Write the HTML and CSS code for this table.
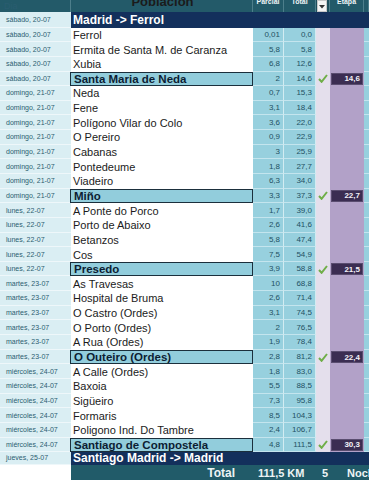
FILE: index.html
```html
<!DOCTYPE html>
<html lang="es">
<head>
<meta charset="utf-8">
<title>Madrid - Ferrol - Santiago</title>
<link rel="stylesheet" href="styles.css">
</head>
<body>
<div class="sheet">
  <div class="row head">
    <div class="c dia hd"><span>Dia</span></div>
    <div class="c pob hd"><span class="big">Población</span></div>
    <div class="c hd"><span>Parcial</span></div>
    <div class="c hd"><span>Total</span></div>
    <div class="c hd filt"><i class="fbtn"><svg width="6" height="4" viewBox="0 0 6 4"><path d="M0 0h6L3 3.5z" fill="#333"/></svg></i></div>
    <div class="c hd"><span>Etapa</span></div>
    <div class="c hd"></div>
  </div>
  <div class="row title">
    <div class="c dia">sábado, 20-07</div>
    <div class="c navy span6">Madrid -&gt; Ferrol</div>
  </div>

  <div class="row"><div class="c dia">sábado, 20-07</div><div class="c pob">Ferrol</div><div class="c num">0,01</div><div class="c num">0,0</div><div class="c f"></div><div class="c et"></div><div class="c st"></div></div>
  <div class="row"><div class="c dia">sábado, 20-07</div><div class="c pob">Ermita de Santa M. de Caranza</div><div class="c num">5,8</div><div class="c num">5,8</div><div class="c f"></div><div class="c et"></div><div class="c st"></div></div>
  <div class="row"><div class="c dia">sábado, 20-07</div><div class="c pob">Xubia</div><div class="c num">6,8</div><div class="c num">12,6</div><div class="c f"></div><div class="c et"></div><div class="c st"></div></div>
  <div class="row hl"><div class="c dia">sábado, 20-07</div><div class="c pob"><b>Santa Maria de Neda</b></div><div class="c num">2</div><div class="c num">14,6</div><div class="c f"><svg class="ck" width="10" height="9" viewBox="0 0 10 9"><path d="M1 5l2.6 2.8L9 1" fill="none" stroke="#6fae48" stroke-width="2"/></svg></div><div class="c et"><b class="eb">14,6</b></div><div class="c st"></div></div>
  <div class="row"><div class="c dia">domingo, 21-07</div><div class="c pob">Neda</div><div class="c num">0,7</div><div class="c num">15,3</div><div class="c f"></div><div class="c et"></div><div class="c st"></div></div>
  <div class="row"><div class="c dia">domingo, 21-07</div><div class="c pob">Fene</div><div class="c num">3,1</div><div class="c num">18,4</div><div class="c f"></div><div class="c et"></div><div class="c st"></div></div>
  <div class="row"><div class="c dia">domingo, 21-07</div><div class="c pob">Polígono Vilar do Colo</div><div class="c num">3,6</div><div class="c num">22,0</div><div class="c f"></div><div class="c et"></div><div class="c st"></div></div>
  <div class="row"><div class="c dia">domingo, 21-07</div><div class="c pob">O Pereiro</div><div class="c num">0,9</div><div class="c num">22,9</div><div class="c f"></div><div class="c et"></div><div class="c st"></div></div>
  <div class="row"><div class="c dia">domingo, 21-07</div><div class="c pob">Cabanas</div><div class="c num">3</div><div class="c num">25,9</div><div class="c f"></div><div class="c et"></div><div class="c st"></div></div>
  <div class="row"><div class="c dia">domingo, 21-07</div><div class="c pob">Pontedeume</div><div class="c num">1,8</div><div class="c num">27,7</div><div class="c f"></div><div class="c et"></div><div class="c st"></div></div>
  <div class="row"><div class="c dia">domingo, 21-07</div><div class="c pob">Viadeiro</div><div class="c num">6,3</div><div class="c num">34,0</div><div class="c f"></div><div class="c et"></div><div class="c st"></div></div>
  <div class="row hl"><div class="c dia">domingo, 21-07</div><div class="c pob"><b>Miño</b></div><div class="c num">3,3</div><div class="c num">37,3</div><div class="c f"><svg class="ck" width="10" height="9" viewBox="0 0 10 9"><path d="M1 5l2.6 2.8L9 1" fill="none" stroke="#6fae48" stroke-width="2"/></svg></div><div class="c et"><b class="eb">22,7</b></div><div class="c st"></div></div>
  <div class="row"><div class="c dia">lunes, 22-07</div><div class="c pob">A Ponte do Porco</div><div class="c num">1,7</div><div class="c num">39,0</div><div class="c f"></div><div class="c et"></div><div class="c st"></div></div>
  <div class="row"><div class="c dia">lunes, 22-07</div><div class="c pob">Porto de Abaixo</div><div class="c num">2,6</div><div class="c num">41,6</div><div class="c f"></div><div class="c et"></div><div class="c st"></div></div>
  <div class="row"><div class="c dia">lunes, 22-07</div><div class="c pob">Betanzos</div><div class="c num">5,8</div><div class="c num">47,4</div><div class="c f"></div><div class="c et"></div><div class="c st"></div></div>
  <div class="row"><div class="c dia">lunes, 22-07</div><div class="c pob">Cos</div><div class="c num">7,5</div><div class="c num">54,9</div><div class="c f"></div><div class="c et"></div><div class="c st"></div></div>
  <div class="row hl"><div class="c dia">lunes, 22-07</div><div class="c pob"><b>Presedo</b></div><div class="c num">3,9</div><div class="c num">58,8</div><div class="c f"><svg class="ck" width="10" height="9" viewBox="0 0 10 9"><path d="M1 5l2.6 2.8L9 1" fill="none" stroke="#6fae48" stroke-width="2"/></svg></div><div class="c et"><b class="eb">21,5</b></div><div class="c st"></div></div>
  <div class="row"><div class="c dia">martes, 23-07</div><div class="c pob">As Travesas</div><div class="c num">10</div><div class="c num">68,8</div><div class="c f"></div><div class="c et"></div><div class="c st"></div></div>
  <div class="row"><div class="c dia">martes, 23-07</div><div class="c pob">Hospital de Bruma</div><div class="c num">2,6</div><div class="c num">71,4</div><div class="c f"></div><div class="c et"></div><div class="c st"></div></div>
  <div class="row"><div class="c dia">martes, 23-07</div><div class="c pob">O Castro (Ordes)</div><div class="c num">3,1</div><div class="c num">74,5</div><div class="c f"></div><div class="c et"></div><div class="c st"></div></div>
  <div class="row"><div class="c dia">martes, 23-07</div><div class="c pob">O Porto (Ordes)</div><div class="c num">2</div><div class="c num">76,5</div><div class="c f"></div><div class="c et"></div><div class="c st"></div></div>
  <div class="row"><div class="c dia">martes, 23-07</div><div class="c pob">A Rua (Ordes)</div><div class="c num">1,9</div><div class="c num">78,4</div><div class="c f"></div><div class="c et"></div><div class="c st"></div></div>
  <div class="row hl"><div class="c dia">martes, 23-07</div><div class="c pob"><b>O Outeiro (Ordes)</b></div><div class="c num">2,8</div><div class="c num">81,2</div><div class="c f"><svg class="ck" width="10" height="9" viewBox="0 0 10 9"><path d="M1 5l2.6 2.8L9 1" fill="none" stroke="#6fae48" stroke-width="2"/></svg></div><div class="c et"><b class="eb">22,4</b></div><div class="c st"></div></div>
  <div class="row"><div class="c dia">miércoles, 24-07</div><div class="c pob">A Calle (Ordes)</div><div class="c num">1,8</div><div class="c num">83,0</div><div class="c f"></div><div class="c et"></div><div class="c st"></div></div>
  <div class="row"><div class="c dia">miércoles, 24-07</div><div class="c pob">Baxoia</div><div class="c num">5,5</div><div class="c num">88,5</div><div class="c f"></div><div class="c et"></div><div class="c st"></div></div>
  <div class="row"><div class="c dia">miércoles, 24-07</div><div class="c pob">Sigüeiro</div><div class="c num">7,3</div><div class="c num">95,8</div><div class="c f"></div><div class="c et"></div><div class="c st"></div></div>
  <div class="row"><div class="c dia">miércoles, 24-07</div><div class="c pob">Formaris</div><div class="c num">8,5</div><div class="c num">104,3</div><div class="c f"></div><div class="c et"></div><div class="c st"></div></div>
  <div class="row"><div class="c dia">miércoles, 24-07</div><div class="c pob">Poligono Ind. Do Tambre</div><div class="c num">2,4</div><div class="c num">106,7</div><div class="c f"></div><div class="c et"></div><div class="c st"></div></div>
  <div class="row hl"><div class="c dia">miércoles, 24-07</div><div class="c pob"><b>Santiago de Compostela</b></div><div class="c num">4,8</div><div class="c num">111,5</div><div class="c f"><svg class="ck" width="10" height="9" viewBox="0 0 10 9"><path d="M1 5l2.6 2.8L9 1" fill="none" stroke="#6fae48" stroke-width="2"/></svg></div><div class="c et"><b class="eb">30,3</b></div><div class="c st"></div></div>

  <div class="row back">
    <div class="c dia">jueves, 25-07</div>
    <div class="c navy span6">Santiago Madrid -&gt; Madrid</div>
  </div>
  <div class="row total">
    <div class="c blank"></div>
    <div class="c tot tlabel">Total</div>
    <div class="c tot tkm">111,5 KM</div>
    <div class="c tot tn">5</div>
    <div class="c tot tnoch">Noches</div>
  </div>
</div>
</body>
</html>
```

FILE: styles.css
```css
html, body {
  margin: 0;
  padding: 0;
  background: #ffffff;
}
body {
  width: 369px;
  height: 480px;
  overflow: hidden;
  font-family: "Liberation Sans", Arial, sans-serif;
}
.sheet {
  display: flex;
  flex-direction: column;
  width: 369px;
}
.row {
  display: grid;
  grid-template-columns: 71px 182px 31px 32px 14px 34px 5px;
  height: 14.65px;
  flex: none;
}
.c {
  display: flex;
  align-items: center;
  overflow: hidden;
  white-space: nowrap;
  box-sizing: border-box;
}

/* header */
.row.head {
  height: 12px;
  background: #235a69;
}
.hd {
  background: #235a69;
  border-right: 1px solid #4d7e8b;
  color: #eef4f6;
  font-size: 7px;
  font-weight: bold;
  justify-content: center;
  align-items: flex-start;
}
.hd span {
  display: block;
  margin-top: -2px;
}
.hd.dia {
  justify-content: flex-start;
  padding-left: 4px;
  font-size: 9px;
  font-weight: normal;
  background: #235a69;
  border-bottom: 0;
}
.hd.dia span { margin-top: 1px; }
.hd .big {
  font-size: 13px;
  margin-top: -6px;
}
.hd.filt {
  background: #1d4e5c;
  align-items: stretch;
  padding: 0 2px 0 1px;
}
.fbtn {
  flex: 1;
  display: flex;
  align-items: center;
  justify-content: center;
  background: #f4f4f4;
  border: 1px solid #c8c8c8;
  padding-top: 2px;
}

/* title rows */
.row.title { height: 15.6px; }
.row.back { height: 12.5px; }
.span6 { grid-column: span 6; }
.navy {
  background: #13305c;
  color: #ffffff;
  font-weight: bold;
  font-size: 12px;
  padding-left: 2px;
}

/* cells */
.dia {
  background: #daeef3;
  border-bottom: 1px solid #eef7fa;
  color: #2a5d70;
  font-size: 7px;
  padding-left: 6px;
}
.pob {
  color: #1b1b1b;
  font-size: 11px;
  padding-left: 2px;
}
.num {
  background: #97d0de;
  border-right: 1px solid #d2ecf2;
  border-bottom: 1px solid #c4e5ee;
  color: #1f5163;
  font-size: 8px;
  justify-content: flex-end;
  padding-right: 3px;
}
.f { background: #e4dfec; justify-content: center; }
.et { background: #b2a1c8; padding: 0 1px; }
.st { background: #97d0de; border-bottom: 1px solid #c4e5ee; }

/* highlighted stage rows */
.hl .pob {
  background: #92cddc;
  border: 1px solid #1b2f3c;
  margin-left: -1px;
  color: #0c1d33;
  font-size: 11.5px;
  padding-left: 3px;
}
.eb {
  flex: 1;
  align-self: stretch;
  margin: 1px 0;
  background: #3b2d52;
  border: 1px solid #5a4d70;
  color: #f3f0f7;
  font-size: 8px;
  padding-right: 2px;
  display: flex;
  align-items: center;
  justify-content: flex-end;
}
.ck { display: block; }

/* total row */
.row.total {
  height: 16px;
  grid-template-columns: 71px 182px 63px 14px 39px;
}
.blank { background: #ffffff; }
.tot {
  background: #215b69;
  color: #eef4f5;
  font-weight: bold;
  font-size: 11px;
}
.tlabel {
  justify-content: flex-end;
  padding-right: 18px;
  font-size: 12px;
}
.tkm { padding-left: 5px; }
.tn { justify-content: flex-end; padding-right: 2px; }
.tnoch { padding-left: 17px; }
```
